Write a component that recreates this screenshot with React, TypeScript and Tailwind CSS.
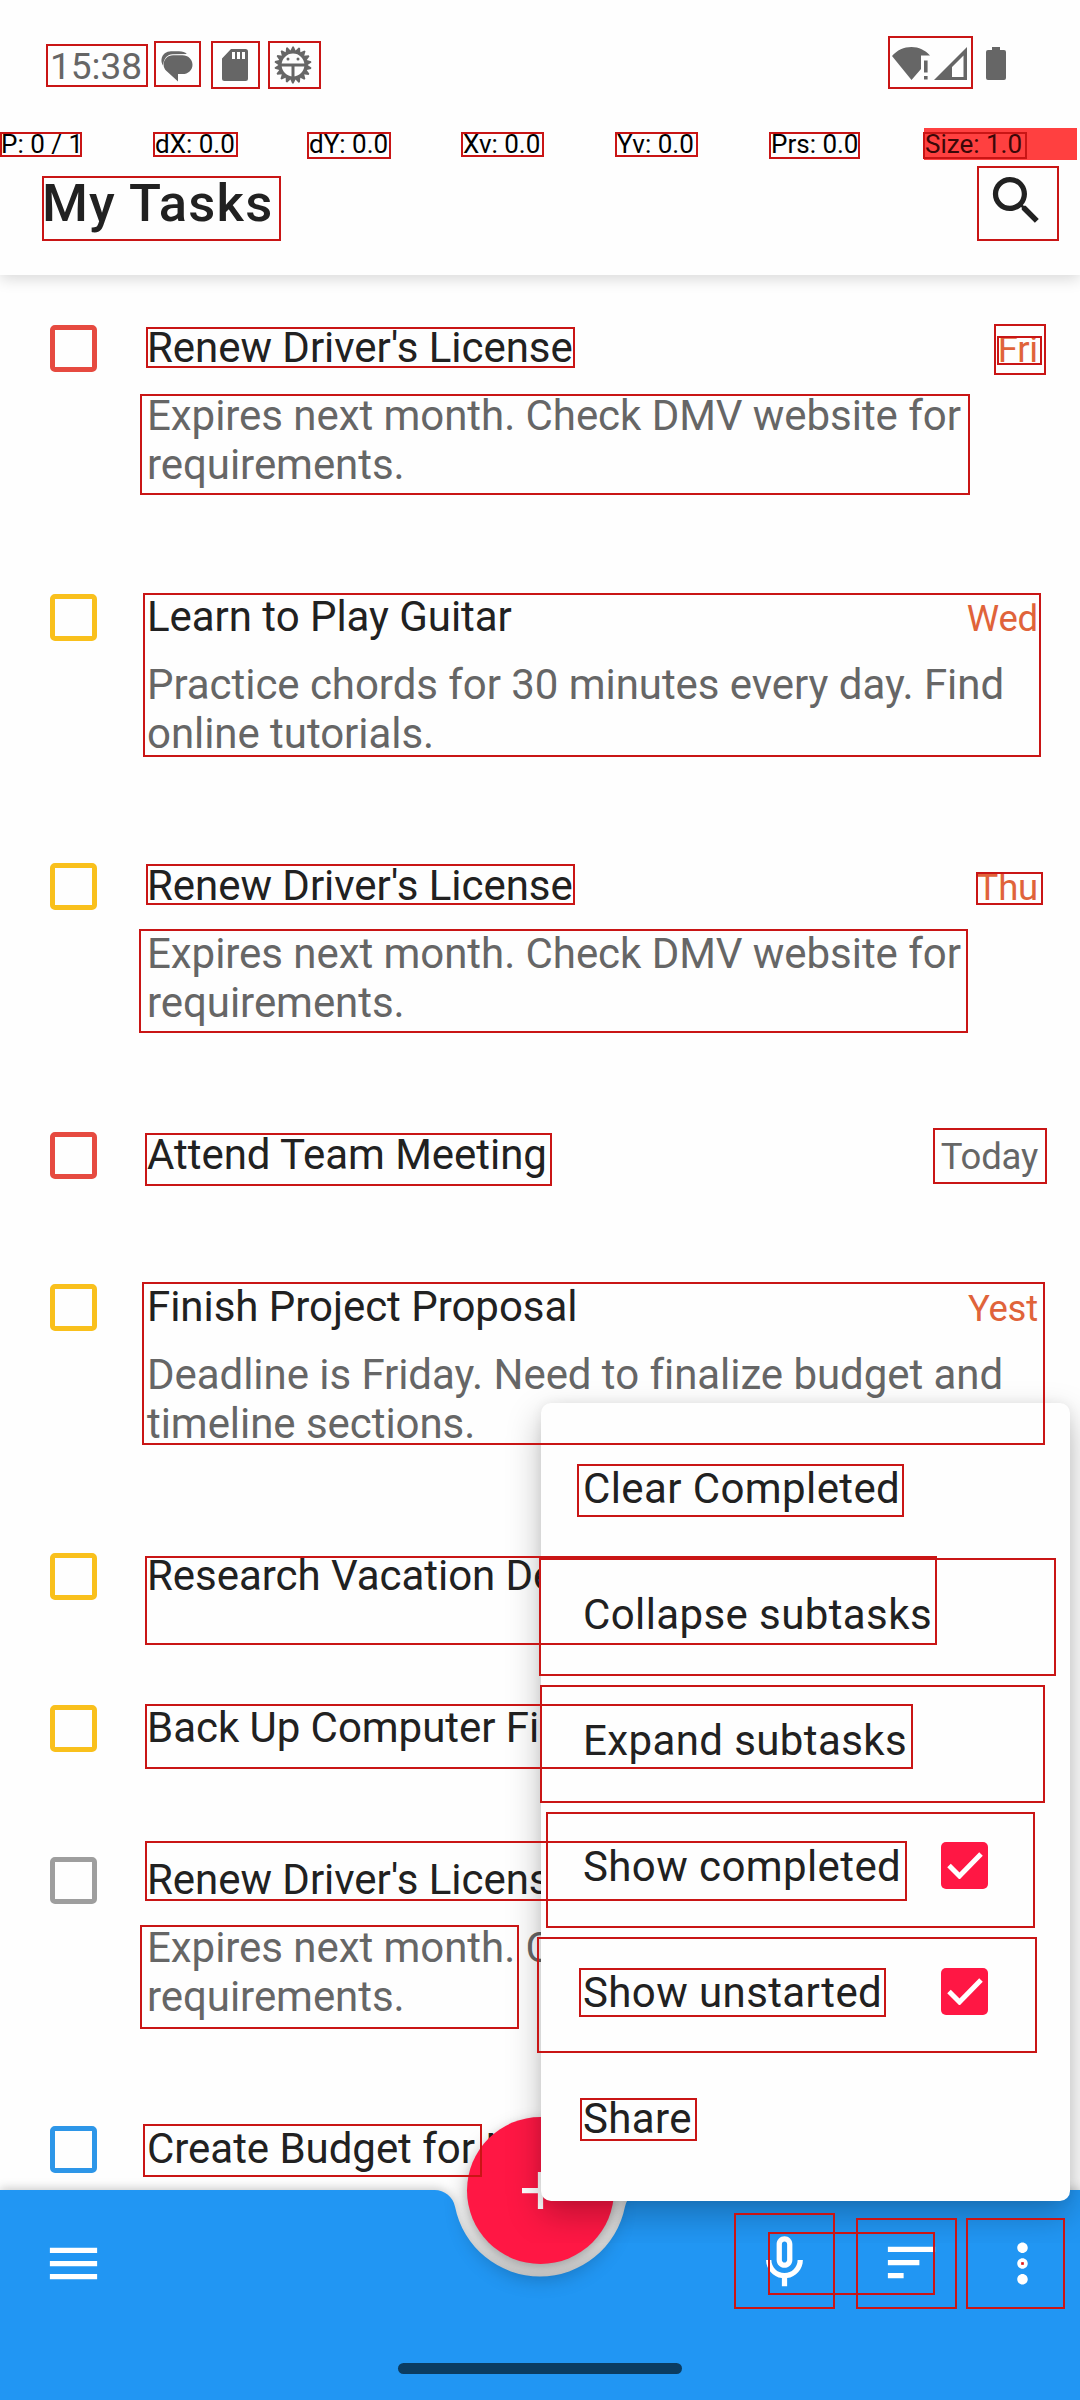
import type { ReactNode } from "react";

const priority = {
  high: "border-[#e64a40]",
  medium: "border-[#f9c01c]",
  low: "border-[#2d96e8]",
  none: "border-[#9e9e9e]",
};

type Task = {
  title: string;
  notes?: string;
  due?: string;
  dueTone?: string;
  level: keyof typeof priority;
  height: string;
};

const tall = "h-[269px]";
const short = "h-[152px]";
const late = "text-[#e0633a]";
const renewNotes = "Expires next month. Check DMV website for requirements.";

const tasks: Task[] = [
  { title: "Renew Driver's License", notes: renewNotes, due: "Fri", dueTone: late, level: "high", height: tall },
  { title: "Learn to Play Guitar", notes: "Practice chords for 30 minutes every day. Find online tutorials.", due: "Wed", dueTone: late, level: "medium", height: tall },
  { title: "Renew Driver's License", notes: renewNotes, due: "Thu", dueTone: late, level: "medium", height: tall },
  { title: "Attend Team Meeting", due: "Today", dueTone: "text-[#666666]", level: "high", height: short },
  { title: "Finish Project Proposal", notes: "Deadline is Friday. Need to finalize budget and timeline sections.", due: "Yest", dueTone: late, level: "medium", height: tall },
  { title: "Research Vacation Destinations", level: "medium", height: short },
  { title: "Back Up Computer Files", level: "medium", height: short },
  { title: "Renew Driver's License", notes: renewNotes, level: "none", height: tall },
  { title: "Create Budget for New Month", level: "low", height: short },
];

const menu = [
  { label: "Clear Completed" },
  { label: "Collapse subtasks" },
  { label: "Expand subtasks" },
  { label: "Show completed", checked: true },
  { label: "Show unstarted", checked: true },
  { label: "Share" },
];

const pointerStats = ["P: 0 / 1", "dX: 0.0", "dY: 0.0", "Xv: 0.0", "Yv: 0.0", "Prs: 0.0"];

// Element bounds: left, top, right, bottom.
const bounds: [number, number, number, number][] = [
  [46, 44, 148, 87], [154, 41, 201, 87], [211, 41, 260, 89], [268, 41, 321, 89], [888, 36, 973, 89],
  [0, 132, 82, 157], [153, 132, 238, 157], [307, 132, 391, 159], [461, 132, 544, 157],
  [615, 132, 698, 157], [769, 132, 860, 159], [923, 132, 1027, 159],
  [42, 176, 281, 241], [977, 166, 1059, 241],
  [146, 327, 575, 368], [140, 394, 970, 495], [994, 324, 1046, 375], [997, 336, 1042, 365],
  [143, 593, 1041, 757],
  [146, 864, 575, 905], [139, 929, 968, 1033], [976, 872, 1043, 905],
  [145, 1133, 552, 1186], [933, 1128, 1047, 1184],
  [142, 1282, 1045, 1445], [145, 1556, 937, 1645],
  [577, 1464, 904, 1517], [539, 1558, 1056, 1676], [540, 1685, 1045, 1803],
  [145, 1704, 913, 1769], [546, 1812, 1035, 1928], [145, 1841, 907, 1901],
  [140, 1925, 519, 2029], [537, 1937, 1037, 2053], [579, 1968, 886, 2017],
  [580, 2098, 697, 2141], [143, 2124, 482, 2177],
  [734, 2213, 835, 2309], [768, 2232, 935, 2295], [856, 2218, 957, 2309], [966, 2218, 1065, 2309],
];

function Glyph({ children, className = "size-[63px]" }: { children: ReactNode; className?: string }) {
  return (
    <svg viewBox="0 0 24 24" fill="currentColor" className={className}>
      {children}
    </svg>
  );
}

function StatusBar() {
  const teeth = Array.from({ length: 18 }, (_, i) => i * 20);
  return (
    <div className="flex h-[128px] items-start text-[#666666]">
      <span className="mt-[45px] ml-[50px] w-[111px] text-[37px] leading-[43px]">15:38</span>
      <svg viewBox="0 0 32 31" fill="currentColor" className="mt-[51px] h-[31px] w-[32px]">
        <path d="M2 14.500C.8 12.500.2 10.500.500 8.200 1.200 3 5.500.2 10 .2h8c3.500 0 6.200 1 7.800 2.800L11.500 3.200C6.500 3.400 2.800 6.800 2 14.500Z" />
        <path d="M12 4.300h9.500c5.600 0 10 4.200 10 9.400s-4.400 9.400-10 9.400H17V30.500L5.500 20C3.600 18.200 2.600 16 2.600 13.700 2.600 8.500 6.700 4.300 12 4.300Z" />
      </svg>
      <svg viewBox="0 0 26 32" className="mt-[49px] ml-[29px] h-[32px] w-[26px]">
        <path fill="currentColor" d="M9 0h14.500A2.500 2.500 0 0 1 26 2.500v27a2.500 2.500 0 0 1-2.500 2.500h-21A2.500 2.500 0 0 1 0 29.500V9.500Z" />
        <path fill="#fff" d="M10 3h3v7h-3zM15 3h3v7h-3zM20 3h3v7h-3z" />
      </svg>
      <svg viewBox="-19 -19 38 38" className="mt-[46px] ml-[26px] size-[38px]">
        {teeth.map((a) => (
          <path key={a} d="M-3 -13.500 L-.6 -18.500 H.8 L3 -13.500Z" fill="currentColor" transform={`rotate(${a})`} />
        ))}
        <circle r="12.900" fill="none" stroke="currentColor" strokeWidth="3" />
        <path d="M-13 0H13M0 0V13" stroke="currentColor" strokeWidth="3" />
        <circle cx="-5" cy="-6" r="1.500" fill="currentColor" />
        <circle cx="5" cy="-6" r="1.500" fill="currentColor" />
      </svg>
      <svg viewBox="0 0 38 33" fill="currentColor" className="mt-[47px] ml-auto h-[33px] w-[38px]">
        <path d="M0 9C5 3.200 12 0 19.500 0S33 3 38 8.500H29V22L19.500 33Z" />
        <path d="M32 13.500h3.600v12H32zM32 29h3.600v3.400H32z" />
      </svg>
      <svg viewBox="0 0 33 33" fill="currentColor" className="mt-[47px] ml-[4px] size-[33px]">
        <path fillRule="evenodd" d="M33 0V33H0ZM29.500 8.500 18 20V30H29.500Z" />
      </svg>
      <svg viewBox="0 0 20 33" fill="currentColor" className="mt-[47px] mr-[74px] ml-[19px] h-[33px] w-[20px]">
        <path d="M6 0h8v3h4a2 2 0 0 1 2 2v26a2 2 0 0 1-2 2H2a2 2 0 0 1-2-2V5a2 2 0 0 1 2-2h4Z" />
      </svg>
    </div>
  );
}

function PointerBar() {
  return (
    <div className="flex h-[32px] text-[26px] leading-[32px] text-black">
      {pointerStats.map((s) => (
        <span key={s} className="w-[154px] pl-px">
          {s}
        </span>
      ))}
      <span className="w-[153px] bg-[#ff4040] pl-px text-[#3a0808]">Size: 1.0</span>
    </div>
  );
}

function TaskRow({ task }: { task: Task }) {
  return (
    <li className={`flex shrink-0 items-start pl-[50px] ${task.height}`}>
      <span className={`mt-[35px] size-[47px] shrink-0 rounded-[5px] border-[5px] ${priority[task.level]}`} />
      <div className="mt-[33px] ml-[50px] w-[891px] leading-[49px]">
        <div className="flex justify-between">
          <span className="text-[42px] tracking-[-0.04px] whitespace-nowrap text-[#212121]">{task.title}</span>
          <span className={`mt-[2px] -mb-[2px] text-[36.5px] tracking-[-0.2px] ${task.dueTone ?? ""}`}>{task.due}</span>
        </div>
        {task.notes && (
          <p className="mt-[19px] w-[875px] text-[42px] tracking-[-0.05px] text-[#666666]">{task.notes}</p>
        )}
      </div>
    </li>
  );
}

function OverflowMenu() {
  return (
    <div className="absolute top-[1340px] left-[470px] h-[903px] w-[610px] overflow-hidden pt-[63px] pl-[71px]">
      <ul className="h-[798px] w-[529px] rounded-[10px] bg-[#fefefe] py-[21px] shadow-[0_14px_34px_rgba(0,0,0,0.26),0_0_12px_rgba(0,0,0,0.06)]">
        {menu.map((m) => (
          <li key={m.label} className="flex h-[126px] items-center justify-between pr-[82px] pl-[42px] text-[42px] tracking-[0.4px] text-[#212121]">
            <span className="mt-[2px]">{m.label}</span>
            {m.checked && (
              <span className="grid size-[47px] place-items-center rounded-[5px] bg-[#ff1744] text-white">
                <svg viewBox="0 0 36 28" className="h-[28px] w-[36px]">
                  <path d="M2 14.500 12.500 25 34 3" fill="none" stroke="currentColor" strokeWidth="5" />
                </svg>
              </span>
            )}
          </li>
        ))}
      </ul>
    </div>
  );
}

function BottomBar() {
  return (
    <div className="absolute top-[2190px] left-0 h-[210px] w-full">
      <svg viewBox="0 0 1080 210" className="absolute inset-0 h-[210px] w-[1080px] overflow-visible drop-shadow-[0_-2px_5px_rgba(0,0,0,0.2)]">
        <path
          fill="#2196f3"
          d="M0 0H434.500A21 21 0 0 1 455.100 16.900A86.600 86.600 0 0 0 624.900 16.900A21 21 0 0 1 645.500 0H1080V210H0Z"
        />
      </svg>
      <div className="absolute -top-[73px] left-[466.5px] grid size-[147px] place-items-center rounded-full bg-[#ff1744] text-white shadow-[0_12px_22px_rgba(0,0,0,0.3),0_2px_8px_rgba(0,0,0,0.12)]">
        <svg viewBox="0 0 37 37" className="size-[37px]">
          <path d="M18.500 0V37M0 18.500H37" stroke="currentColor" strokeWidth="5.250" />
        </svg>
      </div>
      <div className="relative flex items-start pt-[42px] text-white">
        <Glyph className="ml-[42px] size-[63px]">
          <path d="M3 18h18v-2H3v2zm0-5h18v-2H3v2zm0-7v2h18V6H3z" />
        </Glyph>
        <Glyph className="-mt-px ml-[648px] size-[63px]">
          <path d="M12 14c1.660 0 3-1.340 3-3V5c0-1.660-1.340-3-3-3S9 3.340 9 5v6c0 1.660 1.340 3 3 3zm-1-9c0-.55.45-1 1-1s1 .45 1 1v6c0 .55-.45 1-1 1s-1-.45-1-1V5zm6 6c0 2.760-2.240 5-5 5s-5-2.240-5-5H5c0 3.530 2.610 6.430 6 6.920V21h2v-3.080c3.390-.49 6-3.390 6-6.920h-2z" />
        </Glyph>
        <Glyph className="-mt-px ml-[64px] size-[63px]">
          <path d="M3 18h6v-2H3v2zM3 6v2h18V6H3zm0 7h12v-2H3v2z" />
        </Glyph>
        <Glyph className="ml-[48px] size-[63px]">
          <path d="M12 8c1.100 0 2-.9 2-2s-.9-2-2-2-2 .9-2 2 .9 2 2 2zm0 2c-1.100 0-2 .9-2 2s.9 2 2 2 2-.9 2-2-.9-2-2-2zm0 6c-1.100 0-2 .9-2 2s.9 2 2 2 2-.9 2-2-.9-2-2-2z" />
          <rect x="11.500" y="11.500" width="1" height="1" fill="#e01515" />
        </Glyph>
      </div>
      <div className="relative mx-auto mt-[68px] h-[11px] w-[284px] rounded-full bg-[#0b3c61]" />
    </div>
  );
}

export default function App() {
  return (
    <div className="relative h-[2400px] w-[1080px] overflow-hidden bg-[#fefefe] font-['Roboto',sans-serif]">
      <div className="flex h-full flex-col">
        <header className="relative h-[275px] shrink-0 bg-[#fefefe] shadow-[0_4px_14px_rgba(0,0,0,0.15)]">
          <StatusBar />
          <PointerBar />
          <div className="flex items-start justify-between pr-[32px] pl-[42px] text-[#212121]">
            <h1 className="mt-[12px] text-[52.5px] leading-[63px] font-medium tracking-[1.2px]">My Tasks</h1>
            <Glyph className="mt-[9px] size-[63px]">
              <path d="M15.500 14h-.79l-.28-.27C15.410 12.590 16 11.110 16 9.500 16 5.910 13.090 3 9.500 3S3 5.910 3 9.500 5.910 16 9.500 16c1.610 0 3.090-.59 4.230-1.570l.27.28v.79l5 4.990L20.490 19l-4.990-5zm-6 0C7.010 14 5 11.990 5 9.500S7.010 5 9.500 5 14 7.010 14 9.500 11.990 14 9.500 14z" />
            </Glyph>
          </div>
        </header>
        <ul className="flex flex-col pt-[15px]">
          {tasks.map((t, i) => (
            <TaskRow key={i} task={t} />
          ))}
        </ul>
      </div>
      <BottomBar />
      <OverflowMenu />
      <div className="pointer-events-none absolute inset-0">
        {bounds.map(([l, t, r, b], i) => (
          <div
            key={i}
            className="absolute border-2 border-[#c91515]"
            style={{ left: l, top: t, width: r - l, height: b - t }}
          />
        ))}
      </div>
    </div>
  );
}
